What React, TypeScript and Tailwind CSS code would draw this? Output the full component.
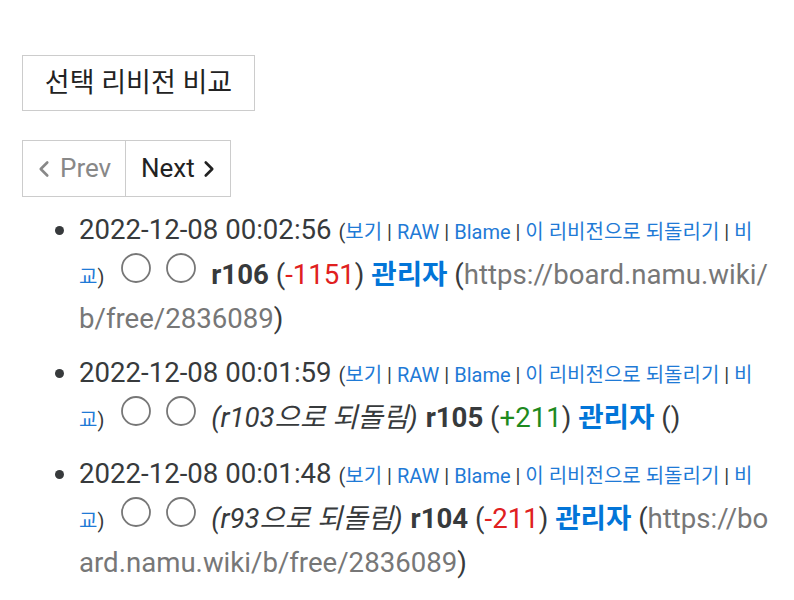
import { ChevronLeft, ChevronRight } from 'lucide-react'

type Rev = {
  date: string
  rev: string
  diff: string
  positive: boolean
  revert?: string
  note: string
}

const revs: Rev[] = [
  { date: '2022-12-08 00:02:56', rev: 'r106', diff: '-1151', positive: false, note: 'https://board.namu.wiki/b/free/2836089' },
  { date: '2022-12-08 00:01:59', rev: 'r105', diff: '+211', positive: true, revert: 'r103으로 되돌림', note: '' },
  { date: '2022-12-08 00:01:48', rev: 'r104', diff: '-211', positive: false, revert: 'r93으로 되돌림', note: 'https://board.namu.wiki/b/free/2836089' },
]

const links = ['보기', 'RAW', 'Blame', '이 리비전으로 되돌리기', '비교']

function Radio({ first }: { first?: boolean }) {
  return (
    <svg
      width="30"
      height="30"
      viewBox="0 0 30 30"
      className={`inline-block align-[1px] mr-[15px] ${first ? 'ml-[10px]' : ''}`}
    >
      <circle cx="15" cy="15" r="14" fill="none" stroke="#777" strokeWidth="1.8" />
    </svg>
  )
}

export default function App() {
  return (
    <div
      className="bg-white min-h-[600px] pl-[22px] pt-[55px] text-[#373a3c]"
      style={{ fontFamily: 'Roboto, "Noto Sans CJK KR", sans-serif' }}
    >
      <button className="h-[56px] w-[233px] border border-[#ccc] text-[27px] leading-none text-[#222]">
        선택 리비전 비교
      </button>

      <div className="mt-[29px] flex w-fit border border-[#ccc] h-[57px] text-[26px]">
        <span className="flex items-center w-[102px] pl-[12px] text-[#888] gap-[3px]">
          <ChevronLeft size={26} strokeWidth={2.4} className="-ml-[4px]" />
          Prev
        </span>
        <span className="flex items-center w-[105px] pl-[15px] border-l border-[#ccc] text-[#222] gap-[1px]">
          Next
          <ChevronRight size={26} strokeWidth={2.4} />
        </span>
      </div>

      <ul className="mt-[12px] pl-[57px] pr-[24px] list-disc marker:text-[#373a3c]">
        {revs.map((r) => (
          <li key={r.date} className="text-[27.6px] leading-[42px] mb-[12px] break-all">
            {r.date}{' '}
            <span className="text-[20px]">
              (
              {links.map((l, i) => (
                <span key={l}>
                  <a className="text-[#1f7ad6]">{l}</a>
                  {i < links.length - 1 ? ' | ' : ''}
                </span>
              ))}
              )
            </span>{' '}
            <Radio first />
            <Radio />
            {r.revert && <i className="mr-[8px]">({r.revert})</i>}
            <b>{r.rev}</b> (
            <span className={r.positive ? 'text-[#1e8a1e]' : 'text-[#e02020]'}>{r.diff}</span>){' '}
            <b className="text-[#0275d8]">관리자</b> (
            <span className="text-[#777]">{r.note}</span>)
          </li>
        ))}
      </ul>
    </div>
  )
}
